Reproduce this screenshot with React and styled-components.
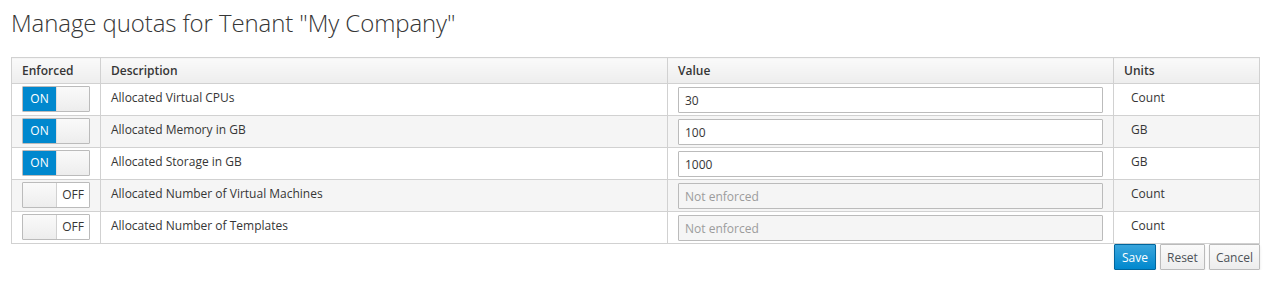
import React from "react";
import styled, { createGlobalStyle } from "styled-components";

const Global = createGlobalStyle`
  html, body { margin: 0; padding: 0; background: #fff; }
  body { font-family: "Open Sans", "Liberation Sans", sans-serif; font-size: 12px; color: #363636; }
`;

const Page = styled.div`
  padding: 0 13px 0 11px;
`;

const Title = styled.h1`
  font-family: "Open Sans", sans-serif;
  font-weight: 300;
  font-size: 24px;
  line-height: 28px;
  margin: 9px 0 20px;
  color: #363636;
  letter-spacing: -0.1px;
`;

const Table = styled.table`
  width: 100%;
  border-collapse: collapse;
  table-layout: fixed;
  border: 1px solid #d1d1d1;
`;

const Th = styled.th`
  text-align: left;
  font-weight: 600;
  font-size: 12px;
  height: 25px;
  padding: 0 10px;
  background: linear-gradient(#fafafa, #ededed);
  border: 1px solid #d1d1d1;
  color: #363636;
  width: ${(p) => p.$w || "auto"};
`;

const Tr = styled.tr`
  background: ${(p) => (p.$striped ? "#f5f5f5" : "#fff")};
`;

const Td = styled.td`
  border: 1px solid #d1d1d1;
  padding: ${(p) => (p.$pad ? p.$pad : "4px 10px 0")};
  height: 27px;
  box-sizing: border-box;
  vertical-align: top;
  line-height: 20px;
`;

const Switch = styled.div`
  display: flex;
  width: 66px;
  height: 24px;
  border: 1px solid #bbb;
  border-radius: 1px;
  background: linear-gradient(#fafafa, #ededed);
  font-size: 12px;
`;

const SwitchOn = styled.div`
  width: 33px;
  display: flex;
  align-items: center;
  justify-content: center;
  background: ${(p) => (p.$on ? "#0088ce" : "transparent")};
  color: #fff;
  border-right: ${(p) => (p.$on ? "none" : "1px solid #d1d1d1")};
`;

const SwitchLabel = styled.div`
  flex: 1;
  display: flex;
  align-items: center;
  justify-content: center;
  color: #363636;
  background: ${(p) => (p.$on ? "linear-gradient(#fafafa, #ededed)" : "#fff")};
  border-left: ${(p) => (p.$on ? "1px solid #e0e0e0" : "none")};
`;

const Input = styled.input`
  box-sizing: border-box;
  width: 100%;
  height: 26px;
  border: 1px solid #bbb;
  border-radius: 1px;
  padding: 2px 6px;
  font-family: "Open Sans", sans-serif;
  font-size: 12px;
  color: #363636;
  background: ${(p) => (p.disabled ? "#f5f5f5" : "#fff")};
  outline: none;
  &::placeholder { color: #9c9c9c; }
`;

const Actions = styled.div`
  display: flex;
  justify-content: flex-end;
  gap: 4px;
  margin-top: 0;
`;

const Button = styled.button`
  height: 26px;
  padding: 0 ${(p) => (p.$primary ? "7px" : "6px")};
  font-family: "Open Sans", sans-serif;
  font-size: 12px;
  border-radius: 1px;
  border: 1px solid ${(p) => (p.$primary ? "#00659c" : "#bbb")};
  background: ${(p) => (p.$primary ? "linear-gradient(#39a5dc, #0088ce)" : "linear-gradient(#fafafa, #ededed)")};
  color: ${(p) => (p.$primary ? "#fff" : "#4d5258")};
  box-shadow: 0 2px 3px rgba(3, 3, 3, 0.1);
`;

const rows = [
  { on: true, desc: "Allocated Virtual CPUs", value: "30", units: "Count" },
  { on: true, desc: "Allocated Memory in GB", value: "100", units: "GB" },
  { on: true, desc: "Allocated Storage in GB", value: "1000", units: "GB" },
  { on: false, desc: "Allocated Number of Virtual Machines", value: "", units: "Count" },
  { on: false, desc: "Allocated Number of Templates", value: "", units: "Count" },
];

export default function App() {
  return (
    <Page>
      <Global />
      <Title>Manage quotas for Tenant "My Company"</Title>
      <Table>
        <thead>
          <tr>
            <Th $w="68px">Enforced</Th>
            <Th $w="546px">Description</Th>
            <Th $w="425px">Value</Th>
            <Th>Units</Th>
          </tr>
        </thead>
        <tbody>
          {rows.map((r, i) => (
            <Tr key={i} $striped={i % 2 === 1}>
              <Td $pad="2px 10px 0">
                <Switch>
                  <SwitchOn $on={r.on}>{r.on ? "ON" : ""}</SwitchOn>
                  <SwitchLabel $on={r.on}>{r.on ? "" : "OFF"}</SwitchLabel>
                </Switch>
              </Td>
              <Td>{r.desc}</Td>
              <Td $pad="3px 10px 2px">
                {r.on ? (
                  <Input defaultValue={r.value} />
                ) : (
                  <Input disabled placeholder="Not enforced" />
                )}
              </Td>
              <Td $pad="4px 10px 0 17px">{r.units}</Td>
            </Tr>
          ))}
        </tbody>
      </Table>
      <Actions>
        <Button $primary>Save</Button>
        <Button>Reset</Button>
        <Button>Cancel</Button>
      </Actions>
    </Page>
  );
}
